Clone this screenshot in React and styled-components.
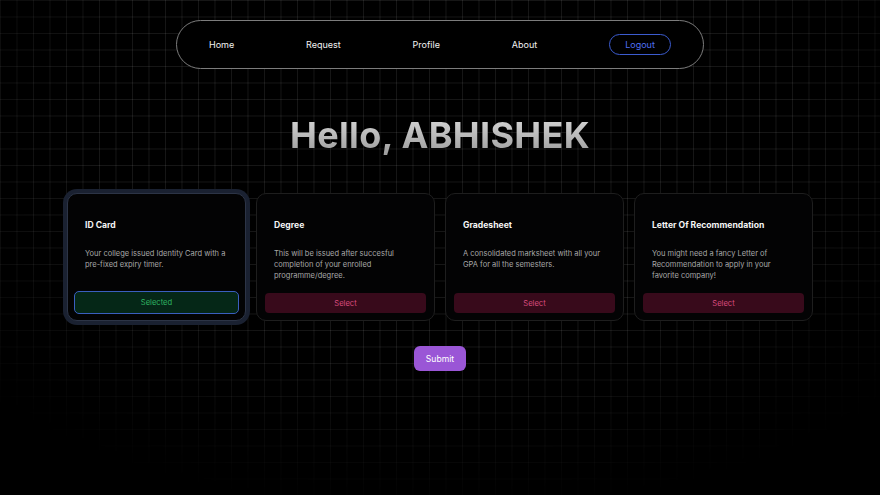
import React from "react";
import styled, { createGlobalStyle, css } from "styled-components";

const GlobalStyle = createGlobalStyle`
  html, body { margin: 0; padding: 0; background: #000; }
  body {
    font-family: Inter, "Noto Sans", sans-serif;
    color: #fff;
    -webkit-font-smoothing: antialiased;
  }
  * { box-sizing: border-box; }
`;

const Page = styled.div`
  position: relative;
  min-height: 495px;
  height: 100vh;
  background: #000;
  overflow: hidden;
  display: flex;
  flex-direction: column;
  align-items: center;
`;

const Grid = styled.div`
  position: absolute;
  inset: 0;
  background-image:
    linear-gradient(to right, rgba(255, 255, 255, 0.085) 1px, transparent 1px),
    linear-gradient(to bottom, rgba(255, 255, 255, 0.085) 1px, transparent 1px);
  background-size: 16.5px 16.5px;
  -webkit-mask-image: radial-gradient(ellipse 72% 78% at 50% 26%, #000 55%, transparent 100%);
  mask-image: radial-gradient(ellipse 72% 78% at 50% 26%, #000 55%, transparent 100%);
  pointer-events: none;
`;

const Content = styled.div`
  position: relative;
  display: flex;
  flex-direction: column;
  align-items: center;
  width: 100%;
`;

const Nav = styled.nav`
  margin-top: 20px;
  width: 528px;
  height: 49px;
  border: 1px solid #7c7c7c;
  border-radius: 25px;
  background: #000;
  display: flex;
  align-items: center;
  justify-content: space-between;
  padding: 0 32px 0 32px;
`;

const NavLink = styled.a`
  font-size: 9px;
  color: #f2f2f2;
  text-decoration: none;
  font-weight: 400;
`;

const LogoutButton = styled.button`
  width: 62px;
  height: 21px;
  border-radius: 11px;
  border: 1px solid #3c5cd0;
  background: transparent;
  color: #4f6ff0;
  font-family: inherit;
  font-size: 9px;
  padding: 0;
`;

const Heading = styled.h1`
  margin: 45px 0 0;
  font-size: 36px;
  line-height: 43px;
  font-weight: 700;
  letter-spacing: 0.3px;
  background: linear-gradient(to bottom, #dadada, #9a9a9a);
  -webkit-background-clip: text;
  background-clip: text;
  color: transparent;
`;

const Cards = styled.div`
  margin-top: 36px;
  display: grid;
  grid-template-columns: repeat(4, 179px);
  gap: 10px;
`;

const Card = styled.div`
  height: 128px;
  background: #030304;
  border: 1px solid ${(p) => (p.$selected ? "#2c3446" : "#1e1e1e")};
  border-radius: 10px;
  padding: 25px 8px 7px;
  display: flex;
  flex-direction: column;
  ${(p) =>
    p.$selected &&
    css`
      box-shadow: 0 0 0 4px #1a2131;
    `}
`;

const CardTitle = styled.div`
  padding: 0 9px;
  font-size: 8.6px;
  line-height: 12px;
  font-weight: 700;
  color: #f5f5f5;
`;

const CardText = styled.p`
  margin: 17px 0 0;
  padding: 0 9px;
  font-size: 7.5px;
  line-height: 11px;
  color: #a8a8a8;
`;

const SelectButton = styled.button`
  margin-top: auto;
  height: 20px;
  width: 100%;
  border-radius: 4px;
  border: none;
  font-family: inherit;
  font-size: 7.6px;
  padding: 0;
  background: #380a1b;
  color: #d84a7e;
  ${(p) =>
    p.$selected &&
    css`
      height: 23px;
      margin: auto -2px -1px;
      width: calc(100% + 4px);
      background: #052717;
      color: #2fb462;
      border: 1px solid #3a5fbf;
      border-radius: 5px;
    `}
`;

const Submit = styled.button`
  margin-top: 25px;
  width: 52px;
  height: 25px;
  border: none;
  border-radius: 6px;
  background: #9a56d6;
  color: #fff;
  font-family: inherit;
  font-size: 8.6px;
  padding: 0;
`;

const docs = [
  {
    title: "ID Card",
    text: "Your college issued Identity Card with a pre-fixed expiry timer.",
    selected: true,
  },
  {
    title: "Degree",
    text: "This will be issued after succesful completion of your enrolled programme/degree.",
  },
  {
    title: "Gradesheet",
    text: "A consolidated marksheet with all your GPA for all the semesters.",
  },
  {
    title: "Letter Of Recommendation",
    text: "You might need a fancy Letter of Recommendation to apply in your favorite company!",
  },
];

export default function App() {
  return (
    <>
      <GlobalStyle />
      <Page>
        <Grid />
        <Content>
          <Nav>
            <NavLink>Home</NavLink>
            <NavLink>Request</NavLink>
            <NavLink>Profile</NavLink>
            <NavLink>About</NavLink>
            <LogoutButton>Logout</LogoutButton>
          </Nav>
          <Heading>Hello, ABHISHEK</Heading>
          <Cards>
            {docs.map((d) => (
              <Card key={d.title} $selected={d.selected}>
                <CardTitle>{d.title}</CardTitle>
                <CardText>{d.text}</CardText>
                <SelectButton $selected={d.selected}>
                  {d.selected ? "Selected" : "Select"}
                </SelectButton>
              </Card>
            ))}
          </Cards>
          <Submit>Submit</Submit>
        </Content>
      </Page>
    </>
  );
}
